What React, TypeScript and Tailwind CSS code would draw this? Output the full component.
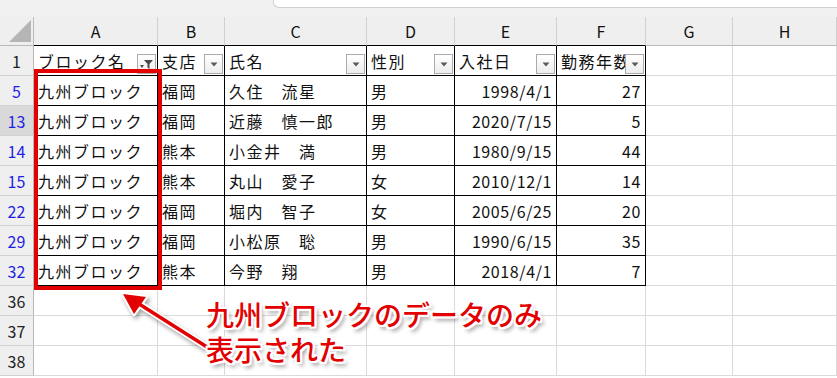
import React from "react";

type Row = {
  no: number;
  block: string;
  branch: string;
  name: string;
  sex: string;
  date: string;
  years: number;
};

const rows: Row[] = [
  { no: 5, block: "九州ブロック", branch: "福岡", name: "久住　流星", sex: "男", date: "1998/4/1", years: 27 },
  { no: 13, block: "九州ブロック", branch: "福岡", name: "近藤　慎一郎", sex: "男", date: "2020/7/15", years: 5 },
  { no: 14, block: "九州ブロック", branch: "熊本", name: "小金井　満", sex: "男", date: "1980/9/15", years: 44 },
  { no: 15, block: "九州ブロック", branch: "熊本", name: "丸山　愛子", sex: "女", date: "2010/12/1", years: 14 },
  { no: 22, block: "九州ブロック", branch: "福岡", name: "堀内　智子", sex: "女", date: "2005/6/25", years: 20 },
  { no: 29, block: "九州ブロック", branch: "福岡", name: "小松原　聡", sex: "男", date: "1990/6/15", years: 35 },
  { no: 32, block: "九州ブロック", branch: "熊本", name: "今野　翔", sex: "男", date: "2018/4/1", years: 7 },
];

const letters = ["A", "B", "C", "D", "E", "F", "G", "H"];
const fields = ["ブロック名", "支店", "氏名", "性別", "入社日", "勤務年数"];

const gridCols = "grid grid-cols-[34px_124px_67px_142px_88px_102px_89px_87px_1fr]";

function FilterButton({ active }: { active?: boolean }) {
  return (
    <div className="absolute right-[1px] bottom-[1px] w-[19px] h-[20px] border border-[#ababab] bg-gradient-to-b from-white to-[#ededed] flex items-center justify-center">
      {active ? (
        <svg width="13" height="12" viewBox="0 0 13 12">
          <path d="M4 2h9L9.5 6v5L7.5 9.5V6z" fill="#4a4a4a" />
          <path d="M0 7h4L2 10z" fill="#4a4a4a" />
        </svg>
      ) : (
        <svg width="8" height="5" viewBox="0 0 8 5">
          <path d="M0.5 0.5h7L4 4.5z" fill="#5a5a5a" />
        </svg>
      )}
    </div>
  );
}

function RowHead({ n, blue, picked }: { n: number; blue?: boolean; picked?: boolean }) {
  return (
    <div
      className={`h-full flex items-center justify-center border-r border-b border-r-[#b9b9b9] border-b-[#d2d2d2] ${
        picked ? "bg-[#d9d9d9]" : "bg-[#efefef]"
      } ${blue ? "text-[#1f1fe6]" : "text-[#222]"}`}
    >
      {n}
    </div>
  );
}

function Cell({
  children,
  dark,
  right,
}: {
  children?: React.ReactNode;
  dark?: boolean;
  right?: boolean;
}) {
  return (
    <div
      className={`relative h-full flex items-center border-r border-b overflow-hidden whitespace-nowrap ${
        dark ? "border-black" : "border-[#dadada]"
      } ${right ? "justify-end pr-[4px] tracking-[0.6px]" : "pl-[4px] tracking-[1.5px]"}`}
    >
      {children}
    </div>
  );
}

export default function App() {
  return (
    <div className="relative w-[837px] h-[378px] overflow-hidden bg-white text-[16px] text-[#111] font-['Noto_Sans_CJK_JP',sans-serif]">
      {/* name box strip above the sheet */}
      <div className="flex h-[17px] bg-[#f0f0f0]">
        <div className="w-[273px]" />
        <div className="flex-1 h-[8px] bg-white border-l border-b border-[#cfcfcf] rounded-bl-[6px]" />
      </div>

      {/* column letters */}
      <div className={`${gridCols} h-[29px] bg-[#efefef]`}>
        <div className="relative h-full border-r border-b border-[#b9b9b9]">
          <svg className="absolute right-[2px] bottom-[3px]" width="22" height="22" viewBox="0 0 22 22">
            <path d="M22 0V22H0z" fill="#b5b5b5" />
          </svg>
        </div>
        {letters.map((l, i) => (
          <div
            key={l}
            className={`h-full flex items-center justify-center border-r border-b border-r-[#d0d0d0] ${
              i < 6 ? "border-b-black" : "border-b-[#b9b9b9]"
            }`}
          >
            {l}
          </div>
        ))}
      </div>

      {/* header row with filter buttons */}
      <div className={`${gridCols} h-[30px]`}>
        <RowHead n={1} />
        {fields.map((f, i) => (
          <Cell key={f} dark>
            {f}
            <FilterButton active={i === 0} />
          </Cell>
        ))}
        <Cell />
        <Cell />
      </div>

      {rows.map((r) => (
        <div key={r.no} className={`${gridCols} h-[30px]`}>
          <RowHead n={r.no} blue picked={r.no === 13} />
          <Cell dark>{r.block}</Cell>
          <Cell dark>{r.branch}</Cell>
          <Cell dark>{r.name}</Cell>
          <Cell dark>{r.sex}</Cell>
          <Cell dark right>
            {r.date}
          </Cell>
          <Cell dark right>
            {r.years}
          </Cell>
          <Cell />
          <Cell />
        </div>
      ))}

      {[36, 37, 38].map((n) => (
        <div key={n} className={`${gridCols} h-[30px]`}>
          <RowHead n={n} />
          <Cell />
          <Cell />
          <Cell />
          <Cell />
          <Cell />
          <Cell />
          <Cell />
          <Cell />
        </div>
      ))}

      {/* highlight around the filtered block column */}
      <div className="absolute left-[34px] top-[69px] w-[128px] h-[221px] border-[4px] border-[#e20000]" />

      {/* callout arrow */}
      <svg
        className="absolute left-0 top-0 pointer-events-none drop-shadow-[2px_3px_2px_rgba(0,0,0,0.35)]"
        width="837"
        height="378"
        viewBox="0 0 837 378"
      >
        <path d="M207 347L136 302" stroke="#fff" strokeWidth="7" strokeLinecap="round" />
        <path d="M123 294L146 297L134 314z" fill="#fff" stroke="#fff" strokeWidth="4" strokeLinejoin="round" />
        <path d="M207 347L136 302" stroke="#e20000" strokeWidth="3.5" />
        <path d="M123 294L146 297L134 314z" fill="#e20000" />
      </svg>

      <div className="absolute left-[206px] top-[297px] text-[28px] leading-[35px] font-medium text-[#e20000] whitespace-nowrap [text-shadow:2px_0_#fff,-2px_0_#fff,0_2px_#fff,0_-2px_#fff,2px_2px_#fff,-2px_-2px_#fff,2px_-2px_#fff,-2px_2px_#fff,3px_4px_4px_rgba(0,0,0,0.45)]">
        <div>九州ブロックのデータのみ</div>
        <div>表示された</div>
      </div>
    </div>
  );
}
